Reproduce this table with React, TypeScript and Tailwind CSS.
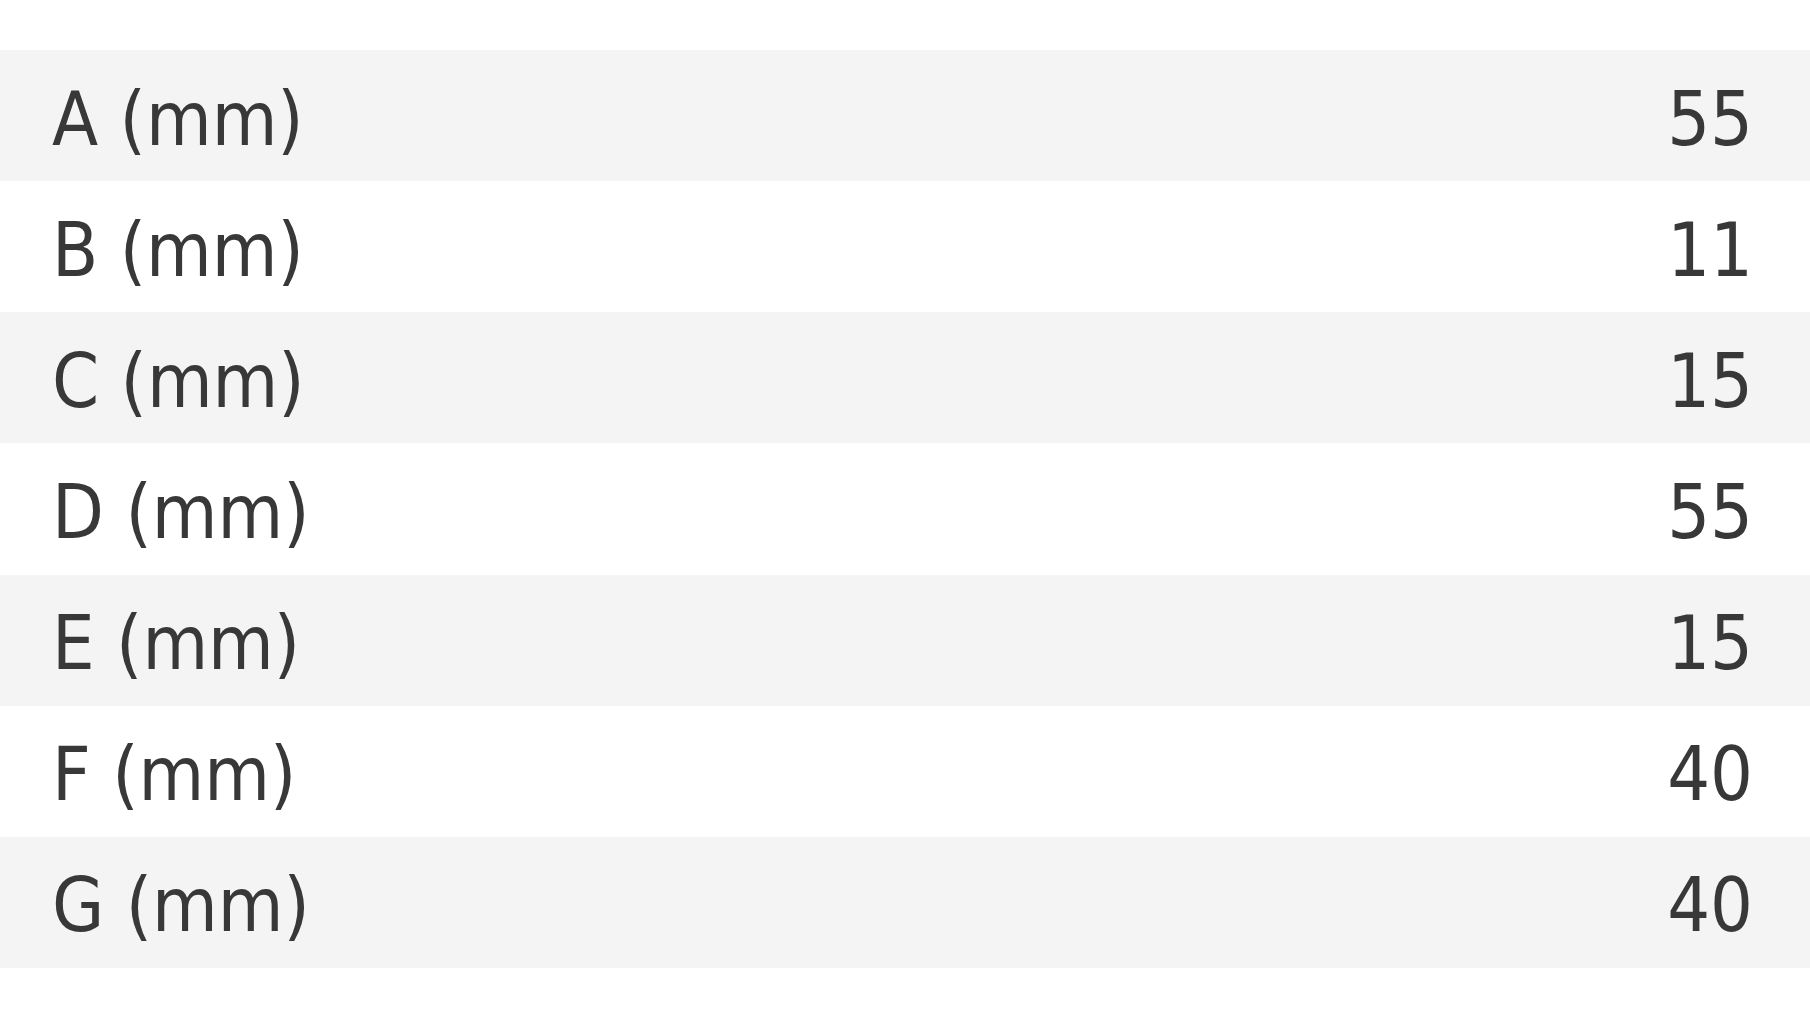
import React from "react";

const rows: [string, string][] = [
  ["A (mm)", "55"],
  ["B (mm)", "11"],
  ["C (mm)", "15"],
  ["D (mm)", "55"],
  ["E (mm)", "15"],
  ["F (mm)", "40"],
  ["G (mm)", "40"],
];

export default function App() {
  return (
    <div
      className="w-[1810px] h-[1018px] bg-white pt-[50px] text-[#383838]"
      style={{ fontFamily: '"DejaVu Sans Condensed", "DejaVu Sans", sans-serif', fontStretch: "condensed" }}
    >
      <div className="flex flex-col">
        {rows.map(([label, value], i) => (
          <div
            key={label}
            className={`flex h-[131.15px] items-center justify-between pl-[52px] pr-[57px] pt-[7px] text-[75px] leading-none ${
              i % 2 === 0 ? "bg-[#f4f4f4]" : "bg-white"
            }`}
          >
            <span>{label}</span>
            <span>{value}</span>
          </div>
        ))}
      </div>
    </div>
  );
}
